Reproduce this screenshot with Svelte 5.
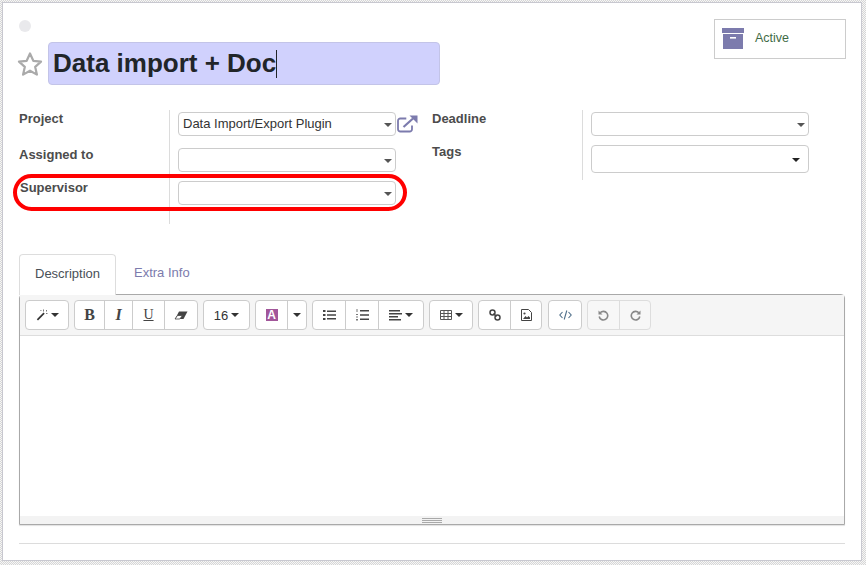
<script>
  const toolbar = [
    { items: [{ w: 42, icon: 'magic', caret: true }] },
    { items: [{ w: 29, icon: 'bold' }, { w: 28, icon: 'italic' }, { w: 32, icon: 'underline' }, { w: 33, icon: 'eraser' }] },
    { items: [{ w: 45, label: '16', caret: true }] },
    { items: [{ w: 31, icon: 'color' }, { w: 19, caret: true }] },
    { items: [{ w: 32, icon: 'ul' }, { w: 33, icon: 'ol' }, { w: 45, icon: 'align', caret: true }] },
    { items: [{ w: 42, icon: 'table', caret: true }] },
    { items: [{ w: 31, icon: 'link' }, { w: 31, icon: 'picture' }] },
    { code: true, items: [{ w: 32, icon: 'code' }] },
    { muted: true, items: [{ w: 31, icon: 'undo' }, { w: 31, icon: 'redo' }] }
  ];
</script>

<div class="sheet">
  <div class="head">
    <span class="dot"></span>
    <button class="stat" type="button">
      <svg width="22" height="21" viewBox="0 0 22 21">
        <rect x="0" y="0" width="22" height="5" fill="#7c7bad" />
        <rect x="1" y="6" width="20" height="15" fill="#7c7bad" />
        <rect x="8" y="9" width="6" height="1.6" fill="#fff" />
      </svg>
      <span>Active</span>
    </button>
  </div>

  <div class="title-row">
    <svg class="star" width="26" height="25" viewBox="0 0 26 25">
      <path d="M13 2.500l3.300 7.300 7.700.8-5.800 5.300 1.700 7.700L13 19.700l-6.900 3.900 1.700-7.700L2 10.600l7.700-.8z" fill="none" stroke="#aaa" stroke-width="2.200" stroke-linejoin="round" />
    </svg>
    <div class="title"><span>Data import + Doc</span><i class="cursor"></i></div>
  </div>

  <div class="form">
    <div class="group left">
      <div class="labels">
        <label class="l-project">Project</label>
        <label class="l-assigned">Assigned to</label>
        <label class="l-super">Supervisor</label>
      </div>
      <div class="fields">
        <div class="row">
          <div class="select">Data Import/Export Plugin<b class="caret"></b></div>
          <svg class="ext" width="21" height="18" viewBox="0 0 21 18">
            <path d="M15 10.500v3.700a2.300 2.300 0 0 1-2.300 2.300H3.300A2.300 2.300 0 0 1 1 14.200V5.800a2.300 2.300 0 0 1 2.300-2.300h6" fill="none" stroke="#7c7bad" stroke-width="1.800" />
            <path d="M6.500 12L16 3.500" fill="none" stroke="#7c7bad" stroke-width="2.200" />
            <path d="M12.500 0.500H20.500V8.500z" fill="#7c7bad" />
          </svg>
        </div>
        <div class="row"><div class="select"><b class="caret"></b></div></div>
        <div class="row tight"><div class="select"><b class="caret"></b></div></div>
      </div>
    </div>
    <div class="group right">
      <div class="labels">
        <label class="l-project">Deadline</label>
        <label class="l-tags">Tags</label>
      </div>
      <div class="fields">
        <div class="row"><div class="select"><b class="caret"></b></div></div>
        <div class="row tags"><div class="select tall"><b class="caret dark"></b></div></div>
      </div>
    </div>
  </div>

  <div class="tabs">
    <span class="tab active">Description</span>
    <span class="tab">Extra Info</span>
  </div>

  <div class="editor">
    <div class="toolbar">
      {#each toolbar as group}
        <div class="btn-group" class:muted={group.muted} class:code={group.code}>
          {#each group.items as item}
            <span class="tool" style="width: {item.w}px">
              {#if item.label}<span>{item.label}</span>{/if}
              {#if item.icon === 'magic'}
                <svg width="12" height="12" viewBox="0 0 12 12"><path d="M.8 10.300L7.500 3.600l1.200 1.200L2 11.500z" fill="#333" /><path d="M7.500.5v2M10.500 1v1.500M11.500 4.500H10M4.500 1l.8 1" stroke="#777" stroke-width="1" /></svg>
              {:else if item.icon === 'bold'}
                <span class="serif b">B</span>
              {:else if item.icon === 'italic'}
                <span class="serif i">I</span>
              {:else if item.icon === 'underline'}
                <span class="serif u">U</span>
              {:else if item.icon === 'eraser'}
                <svg width="14" height="9" viewBox="0 0 14 9"><path d="M5 .5h8.500L9.500 8H1z" fill="#444" /><path d="M1 8l2.500-3.500h5L5.800 8z" fill="#fff" stroke="#444" stroke-width=".8" /></svg>
              {:else if item.icon === 'color'}
                <span class="color-a">A</span>
              {:else if item.icon === 'ul'}
                <svg width="13" height="10" viewBox="0 0 13 10"><path d="M0 0h2.500v2H0zM0 4h2.500v2H0zM0 8h2.500v2H0z" fill="#444" /><path d="M4 .5h9v1.400H4zM4 4.300h9v1.400H4zM4 8.100h9v1.400H4z" fill="#444" /></svg>
              {:else if item.icon === 'ol'}
                <svg width="13" height="12" viewBox="0 0 13 12"><path d="M.5 0h1v3h-1zM0 5h2v1H0zM0 7.500h2v1H0zM0 10h2v1.500H0z" fill="#777" /><path d="M4 1h9v1.400H4zM4 5.300h9v1.400H4zM4 9.600h9v1.400H4z" fill="#444" /></svg>
              {:else if item.icon === 'align'}
                <svg width="13" height="11" viewBox="0 0 13 11"><path d="M0 0h11v1.400H0zM0 3h13v1.400H0zM0 6h9v1.400H0zM0 9h12v1.400H0z" fill="#444" /></svg>
              {:else if item.icon === 'table'}
                <svg width="12" height="10" viewBox="0 0 12 10"><path d="M.5.500h11v9H.5zM.5 3.500h11M.5 6.500h11M4 .5v9M8 .5v9" fill="none" stroke="#555" stroke-width="1" /></svg>
              {:else if item.icon === 'link'}
                <svg width="12" height="12" viewBox="0 0 12 12"><circle cx="3.500" cy="3.500" r="2.500" fill="none" stroke="#444" stroke-width="1.500" /><circle cx="8.500" cy="8.500" r="2.500" fill="none" stroke="#444" stroke-width="1.500" /><path d="M4.500 4.500l3 3" stroke="#444" stroke-width="1.500" /></svg>
              {:else if item.icon === 'picture'}
                <svg width="11" height="12" viewBox="0 0 11 12"><path d="M.5.500h7l3 3v8H.5z" fill="none" stroke="#444" /><path d="M2 10l2.500-3 1.500 1.500 1.500-1.500 1.500 1.500V10z" fill="#444" /><circle cx="3.500" cy="4.500" r="1.100" fill="#444" /></svg>
              {:else if item.icon === 'code'}
                <svg width="13" height="10" viewBox="0 0 13 10"><path d="M3.500 2L.8 5l2.700 3M9.500 2l2.700 3-2.700 3M7.800.5L5.200 9.500" fill="none" stroke="#4f6f8a" stroke-width="1.100" /></svg>
              {:else if item.icon === 'undo'}
                <svg width="11" height="11" viewBox="0 0 11 11"><path d="M2.200 2.800A4.300 4.300 0 1 1 1.200 6.500" fill="none" stroke="#888" stroke-width="1.600" /><path d="M.5.500v4h4z" fill="#888" /></svg>
              {:else if item.icon === 'redo'}
                <svg width="11" height="11" viewBox="0 0 11 11"><path d="M8.800 2.800A4.300 4.300 0 1 0 9.800 6.500" fill="none" stroke="#888" stroke-width="1.600" /><path d="M10.500.5v4h-4z" fill="#888" /></svg>
              {/if}
              {#if item.caret}<b class="tool-caret"></b>{/if}
            </span>
          {/each}
        </div>
      {/each}
    </div>
    <div class="editable"></div>
    <div class="statusbar"><span class="grip"></span></div>
  </div>

  <div class="rule"></div>

  <div class="highlight"></div>
</div>

<style>
  :global(body) {
    margin: 0;
    width: 866px;
    height: 565px;
    overflow: hidden;
    background: repeating-conic-gradient(#d6d6d6 0 25%, #f6f6f6 0 50%) 0 0 / 2px 2px;
    font-family: "Liberation Sans", Arial, sans-serif;
  }

  .sheet {
    position: relative;
    box-sizing: border-box;
    width: 860px;
    height: 559px;
    margin: 2px 0 0 2px;
    padding: 0 16px;
    background: #fff;
    border: 1px solid #c8c8d0;
  }

  .head {
    display: flex;
    justify-content: space-between;
    align-items: flex-start;
    height: 38px;
    padding-top: 16px;
  }

  .dot {
    width: 12px;
    height: 12px;
    margin-top: 1px;
    border-radius: 50%;
    background: #e9e9ec;
  }

  .stat {
    display: flex;
    align-items: center;
    gap: 11px;
    box-sizing: border-box;
    width: 132px;
    height: 40px;
    margin-right: -1px;
    padding: 0 0 2px 7px;
    background: #fff;
    border: 1px solid #ccc;
    font: 12.500px "Liberation Sans", Arial, sans-serif;
    color: #3f6b45;
  }

  .title-row {
    display: flex;
    align-items: center;
    gap: 5px;
    margin-left: -2px;
    margin-top: -15px;
    position: relative;
  }

  .star {
    margin-top: -1px;
  }

  .title {
    display: flex;
    align-items: center;
    box-sizing: border-box;
    width: 392px;
    height: 43px;
    padding-left: 4px;
    background: #d0d1fd;
    border: 1px solid #c3c4e8;
    border-radius: 4px;
    font-size: 26px;
    font-weight: 700;
    color: #212529;
  }

  .cursor {
    display: inline-block;
    width: 1px;
    height: 28px;
    background: #212529;
  }

  .form {
    display: flex;
    margin-top: 25px;
  }

  .group {
    display: flex;
  }

  .group.left {
    width: 413px;
    height: 114px;
  }

  .group.right {
    height: 70px;
  }

  .labels {
    position: relative;
    width: 150px;
    border-right: 1px solid #dcdcdc;
    font-size: 13px;
    font-weight: 700;
    color: #4c4c4c;
  }

  .labels label {
    display: block;
    line-height: 15px;
  }

  .l-project {
    padding-top: 1px;
  }

  .l-assigned {
    margin-top: 21px;
  }

  .l-super {
    margin-top: 18px;
    margin-left: 1px;
  }

  .l-tags {
    margin-top: 18px;
  }

  .fields {
    display: flex;
    flex-direction: column;
    padding-left: 8px;
    padding-top: 2px;
  }

  .row {
    display: flex;
    align-items: center;
    height: 24px;
    margin-bottom: 12px;
  }

  .row.tight {
    margin-top: -3px;
  }

  .row.tags {
    height: 28px;
    margin-top: -3px;
  }

  .select {
    position: relative;
    box-sizing: border-box;
    width: 218px;
    height: 24px;
    padding-left: 4px;
    border: 1px solid #ccc;
    border-radius: 4px;
    background: #fff;
    font-size: 13px;
    line-height: 22px;
    color: #333;
  }

  .select.tall {
    height: 28px;
  }

  .caret {
    position: absolute;
    right: 3px;
    top: 10px;
    border-top: 4px solid #555;
    border-left: 4px solid transparent;
    border-right: 4px solid transparent;
  }

  .caret.dark {
    right: 8px;
    top: 12px;
    border-top-color: #222;
  }

  .ext {
    margin-left: 1px;
  }

  .tabs {
    display: flex;
    margin-top: 30px;
    font-size: 13px;
  }

  .tab {
    box-sizing: border-box;
    height: 41px;
    padding: 11px 18px 0 15px;
    color: #7c7bad;
  }

  .tab.active {
    width: 97px;
    margin-bottom: -1px;
    position: relative;
    z-index: 1;
    background: #fff;
    border: 1px solid #ddd;
    border-bottom: 0;
    border-radius: 4px 4px 0 0;
    color: #495057;
  }

  .tab:not(.active) {
    padding-left: 18px;
  }

  .editor {
    display: flex;
    flex-direction: column;
    box-sizing: border-box;
    height: 231px;
    margin-top: -1px;
    border: 1px solid #a9a9a9;
    border-radius: 4px 4px 0 0;
    box-shadow: 0 1px 1px rgba(0, 0, 0, .12);
  }

  .toolbar {
    display: flex;
    gap: 5px;
    box-sizing: border-box;
    height: 41px;
    padding: 5px 0 0 5px;
    background: #f5f5f5;
    border-bottom: 1px solid #ddd;
  }

  .btn-group {
    display: flex;
    height: 30px;
    box-sizing: border-box;
    background: #fff;
    border: 1px solid #ccc;
    border-radius: 4px;
  }

  .btn-group.code {
    margin-left: 1px;
  }

  .btn-group.muted {
    background: #f7f7f7;
    border-color: #ddd;
  }

  .tool {
    display: flex;
    align-items: center;
    justify-content: center;
    gap: 3px;
    box-sizing: border-box;
    height: 28px;
    border-left: 1px solid #ccc;
    font-size: 13px;
    color: #333;
  }

  .tool:first-child {
    border-left: 0;
  }

  .muted .tool {
    border-color: #ddd;
  }

  .tool-caret {
    border-top: 4px solid #333;
    border-left: 4px solid transparent;
    border-right: 4px solid transparent;
  }

  .serif {
    font-family: "Liberation Serif", serif;
    font-size: 15px;
    color: #444;
  }

  .serif.b {
    font-weight: 700;
    font-size: 16px;
  }

  .serif.i {
    font-style: italic;
    font-weight: 700;
    font-size: 16px;
  }

  .serif.u {
    text-decoration: underline;
    font-size: 14px;
  }

  .color-a {
    display: block;
    width: 12px;
    height: 12px;
    background: #a2569a;
    color: #fff;
    font-size: 12px;
    font-weight: 700;
    line-height: 13px;
    text-align: center;
  }

  .editable {
    flex: 1;
    background: #fff;
  }

  .statusbar {
    display: flex;
    align-items: center;
    justify-content: center;
    height: 8px;
    background: #f3f3f3;
  }

  .grip {
    width: 20px;
    height: 5px;
    border-top: 1px solid #a9a9a9;
    border-bottom: 1px solid #a9a9a9;
    background: linear-gradient(#a9a9a9, #a9a9a9) 0 1px / 100% 1px no-repeat;
    box-sizing: border-box;
  }

  .rule {
    height: 1px;
    margin-top: 18px;
    background: #dcdcdc;
  }

  .highlight {
    position: absolute;
    left: 10px;
    top: 171px;
    width: 394px;
    height: 37px;
    box-sizing: border-box;
    border: 4px solid #f00;
    border-radius: 19px;
    pointer-events: none;
  }
</style>
